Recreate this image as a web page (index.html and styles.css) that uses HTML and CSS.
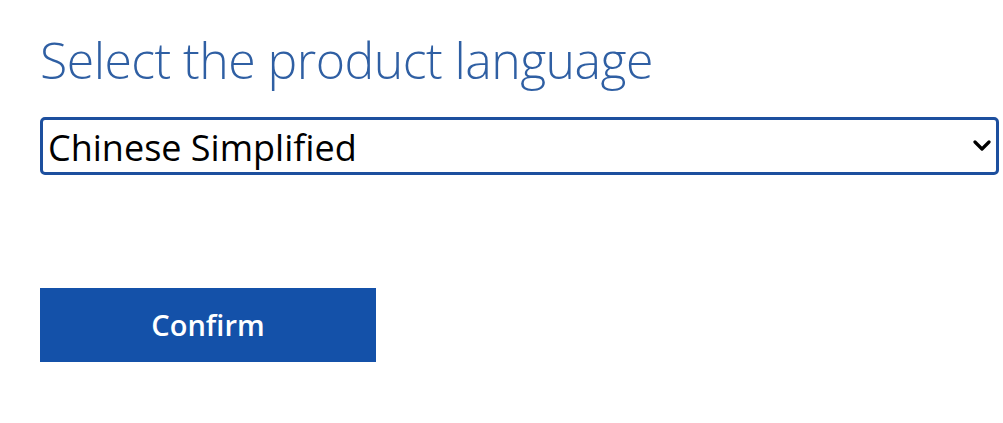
FILE: index.html
```html
<!DOCTYPE html>
<html lang="en">
<head>
<meta charset="utf-8">
<title>Select the product language</title>
<link rel="stylesheet" href="styles.css">
</head>
<body>
<main class="page">
  <h2 class="title">Select the product language</h2>
  <div class="select-wrap">
    <select class="lang-select" aria-label="Product language">
      <option>Chinese Simplified</option>
      <option>Chinese Traditional</option>
      <option>English</option>
    </select>
    <svg class="chevron" viewBox="0 0 18 12" width="18" height="12" aria-hidden="true">
      <path d="M2 2 L9 9 L16 2" fill="none" stroke="#000" stroke-width="3.2" stroke-linecap="round" stroke-linejoin="round"/>
    </svg>
  </div>
  <button class="confirm" type="button">Confirm</button>
</main>
</body>
</html>
```

FILE: styles.css
```css
html, body {
  margin: 0;
  padding: 0;
  background: #ffffff;
}

.page {
  padding: 26px 4px 0 40px;
  font-family: "Open Sans", "Noto Sans", sans-serif;
}

.title {
  margin: 0;
  font-family: "Open Sans", sans-serif;
  font-weight: 300;
  font-size: 50px;
  line-height: 68px;
  color: #2f5fa3;
  letter-spacing: -0.55px;
}

.select-wrap {
  position: relative;
  margin-top: 23px;
}

.lang-select {
  display: block;
  width: 100%;
  height: 58px;
  box-sizing: border-box;
  -webkit-appearance: none;
  appearance: none;
  border: 3px solid #1d4f9e;
  border-radius: 5px;
  background: #ffffff;
  padding: 2px 40px 0 5px;
  font-family: "Open Sans", sans-serif;
  font-size: 36px;
  color: #000000;
  outline: none;
}

.chevron {
  position: absolute;
  right: 8px;
  top: 23px;
  pointer-events: none;
}

.confirm {
  display: flex;
  align-items: center;
  justify-content: center;
  margin-top: 113px;
  width: 336px;
  height: 74px;
  border: none;
  border-radius: 0;
  background: #1451a9;
  color: #ffffff;
  font-family: "Open Sans", sans-serif;
  font-size: 29px;
  font-weight: 600;
  padding: 0 0 2px;
}
```
